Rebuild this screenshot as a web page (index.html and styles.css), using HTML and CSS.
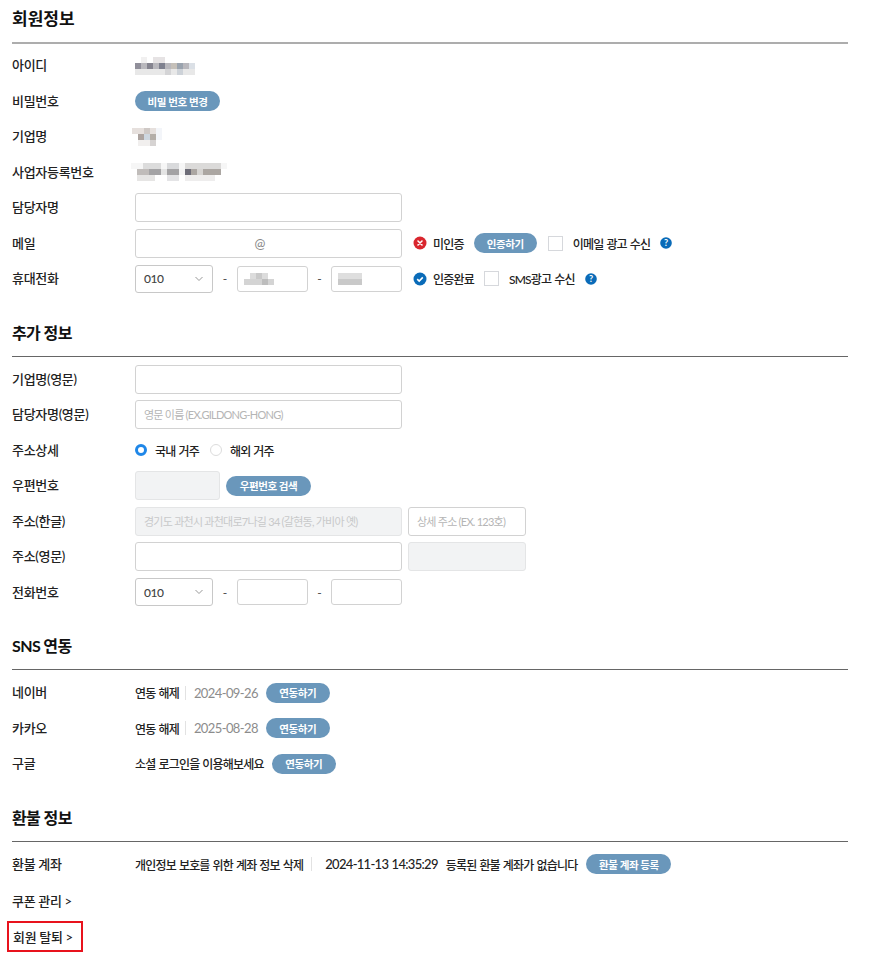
FILE: index.html
```html
<!DOCTYPE html>
<html lang="ko">

<head>
  <meta charset="UTF-8">
  <meta name="viewport" content="width=device-width, initial-scale=1.0">
  <title>회원정보</title>
  <link rel="stylesheet" href="styles.css">
</head>

<body>
  <section class="section section-first">
    <h2 class="title title-first">회원정보</h2>
    <div class="row">
      <div class="label">아이디</div>
      <svg class="mosaic" width="60" height="18" viewBox="0 0 10 3" shape-rendering="crispEdges">
        <rect x="1" y="0" width="1" height="1" fill="#f1f0f0"/><rect x="3" y="0" width="2" height="1" fill="#e6e3e4"/>
        <rect x="0" y="1" width="10" height="1" fill="#b9b8bd"/><rect x="0" y="1" width="1" height="1" fill="#908f9a"/><rect x="2" y="1" width="1" height="1" fill="#85848f"/><rect x="4" y="1" width="1" height="1" fill="#7f818f"/><rect x="6" y="1" width="1" height="1" fill="#c5c0b9"/><rect x="9" y="1" width="1" height="1" fill="#dbe0e6"/><rect x="7" y="1" width="1" height="1" fill="#9aa3ae"/>
        <rect x="0" y="2" width="10" height="1" fill="#e8e8e8"/><rect x="5" y="2" width="1" height="1" fill="#d4d4d6"/><rect x="7" y="2" width="1" height="1" fill="#cdd2d8"/>
      </svg>
    </div>
    <div class="row">
      <div class="label">비밀번호</div>
      <button class="pill pill-wide">비밀 번호 변경</button>
    </div>
    <div class="row">
      <div class="label">기업명</div>
      <svg class="mosaic mosaic-shift" width="30" height="18" viewBox="0 0 5 3" shape-rendering="crispEdges">
        <rect x="0" y="0" width="4" height="1" fill="#e6e0dd"/><rect x="2" y="0" width="1" height="1" fill="#cfc9c6"/><rect x="4" y="0" width="1" height="2" fill="#f3f5f9"/>
        <rect x="1" y="1" width="1" height="1" fill="#ada4a0"/><rect x="2" y="1" width="1" height="1" fill="#ced7e0"/><rect x="3" y="1" width="1" height="1" fill="#b4aea8"/>
        <rect x="1" y="2" width="3" height="1" fill="#f1efee"/><rect x="3" y="2" width="1" height="1" fill="#d6d3d2"/>
      </svg>
    </div>
    <div class="row">
      <div class="label">사업자등록번호</div>
      <svg class="mosaic mosaic-shift-wide" width="96" height="18" viewBox="0 0 16 3" shape-rendering="crispEdges">
        <rect x="0" y="0" width="16" height="1" fill="#f6f6f6"/><rect x="2" y="0" width="3" height="1" fill="#dcdcdc"/><rect x="6" y="0" width="2" height="1" fill="#d9dadc"/><rect x="9" y="0" width="6" height="1" fill="#dbdad9"/>
        <rect x="1" y="1" width="2" height="1" fill="#c0bcba"/><rect x="3" y="1" width="5" height="1" fill="#a4a3a5"/><rect x="5" y="1" width="1" height="1" fill="#e4e4e4"/><rect x="8" y="1" width="1" height="1" fill="#f3f3f3"/><rect x="9" y="1" width="1" height="1" fill="#6e6d78"/><rect x="10" y="1" width="5" height="1" fill="#aba6a2"/><rect x="11" y="1" width="1" height="1" fill="#d6d4d2"/>
        <rect x="1" y="2" width="3" height="1" fill="#e6e5e4"/><rect x="6" y="2" width="2" height="1" fill="#e4e4e6"/><rect x="9" y="2" width="5" height="1" fill="#eeeded"/>
      </svg>
    </div>
    <div class="row">
      <div class="label">담당자명</div>
      <input class="input input-full" type="text">
    </div>
    <div class="row">
      <div class="label">메일</div>
      <input class="input input-full input-mail" type="text" value="@">
      <svg class="status" width="14" height="14" viewBox="0 0 14 14">
        <circle cx="7" cy="7" r="6.5" fill="#d9262e"/>
        <path d="M5 5l4 4M9 5l-4 4" stroke="#fff" stroke-width="1.6" stroke-linecap="round"/>
      </svg>
      <span class="text status-text">미인증</span>
      <button class="pill pill-verify">인증하기</button>
      <span class="check check-mail"></span>
      <span class="text check-label">이메일 광고 수신</span>
      <svg class="help" width="12" height="12" viewBox="0 0 12 12">
        <circle cx="6" cy="6" r="5.8" fill="#0a6bb8"/>
        <text x="6" y="9" text-anchor="middle" class="help-mark">?</text>
      </svg>
    </div>
    <div class="row">
      <div class="label">휴대전화</div>
      <div class="select"><span>010</span>
        <svg width="10" height="6" viewBox="0 0 10 6"><path d="M1.5 1l3.5 3.5L8.5 1" fill="none" stroke="#999" stroke-width="1"/></svg>
      </div>
      <span class="dash">-</span>
      <div class="input input-phone masked">
        <svg width="30" height="14" viewBox="0 0 5 2" shape-rendering="crispEdges">
          <rect x="1" y="0" width="3" height="1" fill="#dcdcdc"/><rect x="2" y="0" width="1" height="1" fill="#c9c9c9"/>
          <rect x="0" y="1" width="5" height="1" fill="#d4d4d4"/><rect x="3" y="1" width="1" height="1" fill="#bdbdbd"/>
        </svg>
      </div>
      <span class="dash">-</span>
      <div class="input input-phone masked">
        <svg width="24" height="14" viewBox="0 0 4 2" shape-rendering="crispEdges">
          <rect x="0" y="0" width="4" height="1" fill="#dedede"/>
          <rect x="0" y="1" width="4" height="1" fill="#c9c9c9"/>
        </svg>
      </div>
      <svg class="status" width="14" height="14" viewBox="0 0 14 14">
        <circle cx="7" cy="7" r="6.5" fill="#0a6bb8"/>
        <path d="M4.2 7.2l2 1.9 3.6-3.7" fill="none" stroke="#fff" stroke-width="1.6"/>
      </svg>
      <span class="text status-text">인증완료</span>
      <span class="check check-sms"></span>
      <span class="text check-label">SMS광고 수신</span>
      <svg class="help" width="12" height="12" viewBox="0 0 12 12">
        <circle cx="6" cy="6" r="5.8" fill="#0a6bb8"/>
        <text x="6" y="9" text-anchor="middle" class="help-mark">?</text>
      </svg>
    </div>
  </section>

  <section class="section">
    <h2 class="title">추가 정보</h2>
    <div class="row">
      <div class="label">기업명(영문)</div>
      <input class="input input-full" type="text">
    </div>
    <div class="row">
      <div class="label">담당자명(영문)</div>
      <input class="input input-full" type="text" placeholder="영문 이름 (EX.GILDONG-HONG)">
    </div>
    <div class="row">
      <div class="label">주소상세</div>
      <span class="radio radio-on"></span>
      <span class="text radio-label">국내 거주</span>
      <span class="radio"></span>
      <span class="text radio-label">해외 거주</span>
    </div>
    <div class="row">
      <div class="label">우편번호</div>
      <input class="input input-zip input-off" type="text" disabled>
      <button class="pill pill-wide pill-zip">우편번호 검색</button>
    </div>
    <div class="row">
      <div class="label">주소(한글)</div>
      <input class="input input-full input-off" type="text" disabled placeholder="경기도 과천시 과천대로7나길 34 (갈현동, 가비아 옛)">
      <input class="input input-detail" type="text" placeholder="상세 주소 (EX. 123호)">
    </div>
    <div class="row">
      <div class="label">주소(영문)</div>
      <input class="input input-full" type="text">
      <input class="input input-detail input-off" type="text" disabled>
    </div>
    <div class="row">
      <div class="label">전화번호</div>
      <div class="select"><span>010</span>
        <svg width="10" height="6" viewBox="0 0 10 6"><path d="M1.5 1l3.5 3.5L8.5 1" fill="none" stroke="#999" stroke-width="1"/></svg>
      </div>
      <span class="dash">-</span>
      <input class="input input-phone" type="text">
      <span class="dash">-</span>
      <input class="input input-phone" type="text">
    </div>
  </section>

  <section class="section">
    <h2 class="title">SNS 연동</h2>
    <div class="row">
      <div class="label">네이버</div>
      <span class="text">연동 해제</span>
      <span class="divider"></span>
      <span class="date">2024-09-26</span>
      <button class="pill pill-link">연동하기</button>
    </div>
    <div class="row">
      <div class="label">카카오</div>
      <span class="text">연동 해제</span>
      <span class="divider"></span>
      <span class="date">2025-08-28</span>
      <button class="pill pill-link">연동하기</button>
    </div>
    <div class="row">
      <div class="label">구글</div>
      <span class="text">소셜 로그인을 이용해보세요</span>
      <button class="pill pill-link">연동하기</button>
    </div>
  </section>

  <section class="section">
    <h2 class="title">환불 정보</h2>
    <div class="row">
      <div class="label">환불 계좌</div>
      <span class="text">개인정보 보호를 위한 계좌 정보 삭제</span>
      <span class="divider divider-refund"></span>
      <span class="text stamp">2024-11-13 14:35:29</span>
      <span class="text none-text">등록된 환불 계좌가 없습니다</span>
      <button class="pill pill-wide pill-refund">환불 계좌 등록</button>
    </div>
    <div class="row row-link"><a class="link">쿠폰 관리 &gt;</a></div>
    <div class="row row-link"><a class="link link-marked">회원 탈퇴 &gt;</a></div>
  </section>
</body>

</html>
```
FILE: styles.css
```css
* {
  box-sizing: border-box;
}

body {
  margin: 0;
  padding: 0 32px 0 12px;
  font-family: Lato, "Noto Sans CJK KR", sans-serif;
  font-size: 12px;
  font-weight: 500;
  color: #222;
  background: #fff;
}

.section {
  padding-top: 24px;
}

.section-first {
  padding-top: 6px;
}

.title {
  margin: 0 0 5px;
  height: 36px;
  padding-bottom: 13px;
  display: flex;
  align-items: center;
  font-size: 16px;
  font-weight: 700;
  letter-spacing: -0.6px;
  color: #111;
  border-bottom: 1px solid #666;
}

.title-first {
  height: 38px;
  font-size: 17px;
  letter-spacing: 0;
  border-bottom: 2px solid #adadad;
  margin-bottom: 4px;
}

.row {
  display: flex;
  align-items: center;
  height: 35.5px;
}

.row-link {
  height: 36.5px;
}

.label {
  width: 123px;
  flex: none;
  padding-bottom: 2px;
  font-size: 13px;
  letter-spacing: -0.3px;
  color: #222;
}

.text {
  white-space: nowrap;
  letter-spacing: -0.8px;
  word-spacing: 0.7px;
}

.pill {
  height: 20px;
  padding: 0;
  border: 0;
  border-radius: 10px;
  background: #6a97bb;
  color: #fff;
  font-family: inherit;
  font-size: 10.5px;
  font-weight: 700;
  letter-spacing: -0.4px;
}

.pill-wide {
  width: 85px;
}

.pill-zip {
  margin-left: 6px;
}

.pill-verify {
  width: 63px;
  margin-left: 10px;
}

.pill-link {
  width: 64px;
  margin-left: 8px;
}

.pill-refund {
  margin-left: 9px;
}

.input {
  height: 29px;
  padding: 0 8px;
  border: 1px solid #d2d2d2;
  border-radius: 3px;
  background: #fff;
  font-family: inherit;
  font-size: 11px;
  letter-spacing: -0.75px;
  color: #888;
}

.input::placeholder {
  color: #b5b5b5;
}

.input-full {
  width: 267px;
  flex: none;
}

.input-mail {
  text-align: center;
  padding-right: 26px;
  font-size: 13px;
}

.input-off {
  background: #f2f3f4;
  border-color: #e4e5e6;
}

.input-off::placeholder {
  color: #c8c9ca;
}

.input-zip {
  width: 85px;
}

.input-detail {
  width: 118px;
  margin-left: 6px;
}

.input-phone {
  width: 71px;
  height: 26px;
  flex: none;
}

.masked {
  display: flex;
  align-items: center;
  padding: 0 0 0 6px;
}

.select {
  width: 78px;
  height: 28px;
  flex: none;
  display: flex;
  align-items: center;
  justify-content: space-between;
  padding: 0 8px;
  border: 1px solid #c8c8c8;
  border-radius: 3px;
  font-size: 12px;
  letter-spacing: -0.5px;
  color: #444;
}

.dash {
  width: 24px;
  flex: none;
  text-align: center;
  color: #555;
}

.dash + .input + .dash {
  width: 23px;
}

.mosaic-shift {
  margin-left: -3px;
}

.mosaic-shift-wide {
  margin-left: -4px;
}

.status {
  margin-left: 11px;
  flex: none;
}

.status-text {
  margin-left: 6px;
}

.check {
  width: 15px;
  height: 15px;
  flex: none;
  border: 1px solid #d6d8dc;
  background: #fff;
}

.check-mail {
  margin-left: 11px;
}

.check-sms {
  margin-left: 10px;
}

.check-label {
  margin-left: 10px;
}

.help {
  margin-left: 10px;
  flex: none;
}

.help-mark {
  font-size: 9px;
  font-weight: 700;
  fill: #fff;
}

.radio {
  width: 12px;
  height: 12px;
  flex: none;
  border: 1px solid #dcdcdc;
  border-radius: 50%;
  background: #fff;
}

.radio-on {
  border: 3.5px solid #1f87e8;
}

.radio-label {
  margin: 0 11px 0 8px;
}

.divider {
  width: 1px;
  height: 14px;
  margin: 0 8px 0 6px;
  background: #e2e2e2;
}

.divider-refund {
  margin-left: 8px;
}

.date {
  font-size: 13px;
  letter-spacing: -0.6px;
  color: #8c8c8c;
  font-weight: 400;
}

.stamp {
  margin-left: 5px;
  font-size: 13px;
  letter-spacing: -0.7px;
}

.none-text {
  margin-left: 8px;
}

.link {
  font-size: 13px;
  letter-spacing: -0.3px;
  color: #222;
}

.link-marked {
  margin-left: -5px;
  padding: 0 8px 0 4px;
  height: 31px;
  display: flex;
  align-items: center;
  border: 2px solid #e8131d;
}
```
